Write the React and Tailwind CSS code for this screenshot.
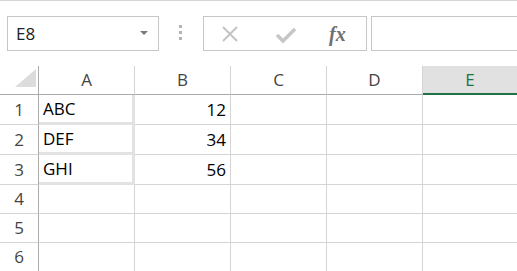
import React from "react";

const cols = ["A", "B", "C", "D", "E"];
const rows = [
  { n: 1, h: "h-[30px]", a: "ABC", b: "12" },
  { n: 2, h: "h-[30px]", a: "DEF", b: "34" },
  { n: 3, h: "h-[30px]", a: "GHI", b: "56" },
  { n: 4, h: "h-[29px]" },
  { n: 5, h: "h-[29px]" },
  { n: 6, h: "h-[29px]" },
];

export default function App() {
  return (
    <div className="w-[517px] h-[271px] overflow-hidden bg-white border-t border-[#d5d5d5] font-['Open_Sans',sans-serif]">
      {/* Formula bar */}
      <div className="flex items-start h-[65px] pt-[15px]">
        <div className="ml-[7px] w-[152px] h-[35px] border border-[#c6c6c6] flex items-center justify-between pl-[8px] pr-[10px]">
          <span className="text-[17px] text-[#222] leading-none">E8</span>
          <svg width="8" height="5" viewBox="0 0 8 5">
            <path d="M0 0 L8 0 L4 4 Z" fill="#7a7a7a" />
          </svg>
        </div>
        <div className="ml-[20px] mt-[9px] flex flex-col gap-[3px]">
          <div className="w-[3px] h-[3px] bg-[#b4b4b4]" />
          <div className="w-[3px] h-[3px] bg-[#b4b4b4]" />
          <div className="w-[3px] h-[3px] bg-[#b4b4b4]" />
        </div>
        <div className="ml-[21px] w-[164px] h-[35px] border border-[#c6c6c6] flex items-center">
          <svg className="ml-[17px]" width="18" height="18" viewBox="0 0 18 18">
            <path d="M2 2 L16 16 M16 2 L2 16" stroke="#c2c2c2" strokeWidth="1.8" />
          </svg>
          <svg className="ml-[37px] mt-[3px]" width="20" height="16" viewBox="0 0 20 16">
            <path d="M1 8 L7 14 L19 2" stroke="#c6c6c6" strokeWidth="3.5" fill="none" />
          </svg>
          <span className="ml-[33px] text-[20px] leading-none italic font-bold text-[#707070] font-['Liberation_Serif',serif]">fx</span>
        </div>
        <div className="ml-[4px] flex-1 h-[35px] border border-r-0 border-[#c6c6c6]" />
      </div>

      {/* Grid */}
      <div className="grid grid-cols-[39px_96px_96px_96px_96px_1fr]">
        <div className="h-[29px] border-r border-b border-[#ababab] relative">
          <svg className="absolute left-[15px] top-[3px]" width="21" height="18" viewBox="0 0 21 18">
            <path d="M21 0 L21 18 L0 18 Z" fill="#dcdcdc" />
          </svg>
        </div>
        {cols.map((c) =>
          c === "E" ? (
            <div
              key={c}
              className="h-[29px] bg-[#e1e1e1] border-b-2 border-[#217346] flex items-center justify-center text-[17px] text-[#217346]"
            >
              {c}
            </div>
          ) : (
            <div
              key={c}
              className="h-[29px] border-r border-[#d4d4d4] border-b border-b-[#ababab] flex items-center justify-center text-[17px] text-[#444]"
            >
              {c}
            </div>
          )
        )}
        {rows.map((r) => (
          <React.Fragment key={r.n}>
            <div className={`${r.h} border-r border-r-[#ababab] border-b border-b-[#d4d4d4] flex items-center justify-center text-[17px] text-[#444]`}>
              {r.n}
            </div>
            {r.a ? (
              <div className={`${r.h} border-r-[3px] border-b-[3px] border-[#e2e2e2] flex items-center pl-[4px] text-[17px] text-black`}>
                {r.a}
              </div>
            ) : (
              <div className={`${r.h} border-r border-b border-[#d4d4d4]`} />
            )}
            <div className={`${r.h} border-r border-b border-[#d4d4d4] flex items-center justify-end pr-[4px] text-[17px] text-black`}>
              {r.b}
            </div>
            <div className={`${r.h} border-r border-b border-[#d4d4d4]`} />
            <div className={`${r.h} border-r border-b border-[#d4d4d4]`} />
            <div className={`${r.h} border-b border-[#d4d4d4]`} />
          </React.Fragment>
        ))}
      </div>
    </div>
  );
}
